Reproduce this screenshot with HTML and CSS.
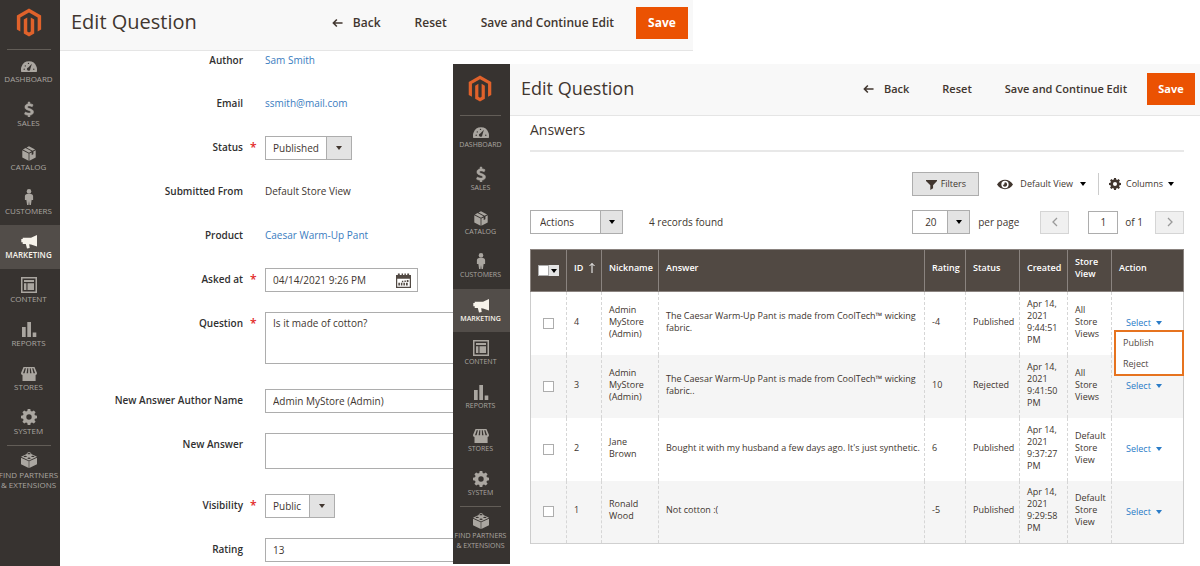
FILE: index.html
```html
<!DOCTYPE html>
<html lang="en">
<head>
<meta charset="utf-8">
<title>Edit Question</title>
<link rel="stylesheet" href="styles.css">
</head>
<body>
<svg class="sprite" aria-hidden="true">
  <symbol id="i-logo" viewBox="0 0 24 24"><path d="M12 0 1.6 6v12l2.97 1.7v-12L12 3.43l7.43 4.27v12L22.4 18V6zM13.5 19.7l-1.5.9-1.5-.9v-12L7.54 9.43v12L12 24l4.46-2.57v-12L13.5 7.7z"/></symbol>
  <symbol id="i-dash" viewBox="0 0 16 16"><path fill-rule="evenodd" d="M.3 15A8 8 0 0 1 .6 9.500 7.800 7.800 0 0 1 15.400 9.500a8 8 0 0 1 .3 5.500zM10.900 6.800 7.300 10.400a1.700 1.700 0 1 0 2 1.600zM3.200 11.500a.7.7 0 1 0 0 1.400.7.7 0 0 0 0-1.400zM4.300 8.200a.7.7 0 1 0 0 1.400.7.7 0 0 0 0-1.400zM7.500 5.700a.7.7 0 1 0 0 1.400.7.7 0 0 0 0-1.400zM12.800 11.500a.7.7 0 1 0 0 1.400.7.7 0 0 0 0-1.400z"/></symbol>
  <symbol id="i-dollar" viewBox="0 0 16 16"><path stroke="currentColor" stroke-width=".5" d="M7.100 1h1.800v1.700c1.500.1 2.600.6 3.200 1.100l-.9 2c-.9-.5-1.900-.9-3-.9-1.200 0-1.700.5-1.700 1.100 0 .8.900 1.100 2.300 1.600 2.300.8 3.700 1.700 3.700 3.500 0 1.500-1.200 2.900-3.600 3.200V16H7.100v-1.700c-1.500-.1-2.900-.6-3.600-1.200l.9-2.100c.9.6 2.200 1.100 3.500 1.100 1.200 0 1.900-.4 1.900-1.100 0-.8-.8-1.100-2.200-1.600C5.300 8.700 3.900 7.900 3.900 6c0-1.500 1.100-2.900 3.200-3.200z"/></symbol>
  <symbol id="i-box" viewBox="0 0 16 16"><path d="M7.600 8.500v7.300L1.300 12.500V5.300zM8.400 8.500v7.300l6.300-3.300V5.300L12.400 6.500v2.700l-1.700.9V7.400zM1.900 4.500 4.600 3.100l6 3.200L8 7.700zM5.500 2.600 8 1.300l6.100 3.200-2.600 1.300z"/></symbol>
  <symbol id="i-person" viewBox="0 0 16 16"><circle cx="8" cy="2.400" r="2.300"/><path d="M6.200 5h3.600c1.500 0 2.300 1 2.300 2.300V11h-1.400v-.5L9.900 16H8.500l-.5-4-.5 4H6.100l-.8-5.500v.5H3.900V7.300C3.900 6 4.700 5 6.200 5z"/></symbol>
  <symbol id="i-horn" viewBox="0 0 16 16"><path d="M16 2v11.500l-6-2-1.800-.2.500 3.600-2.700.6-1.200-4.400H1.700V9.300H.3V5.900h1.400V4.700H10z"/></symbol>
  <symbol id="i-layout" viewBox="0 0 16 16"><path fill-rule="evenodd" d="M0 0h16v16H0zM1.500 1.500v13h13v-13zM3 3h10v2H3zM3 6.300h2.400v6.700H3zM6.500 6.300H13v6.700H6.500z"/></symbol>
  <symbol id="i-bars" viewBox="0 0 16 16"><path d="M1 6h3.700v10H1zM6.300 1H10v15H6.300zM11.700 11.500h3.600V16h-3.600z"/></symbol>
  <symbol id="i-store" viewBox="0 0 16 16"><path fill-rule="evenodd" d="M2.500 2h11L16 8c0 1.200-.6 2-1.400 2v6H1.500v-6C.6 10 0 9.200 0 8zM3.700 3.300 2 8.300h1.600l1.300-5zM6.300 3.300l-.7 5h1.500l.2-5zM8.800 3.300l.2 5h1.500l-.8-5zM11.200 3.300l1.300 5h1.600l-1.700-5z"/></symbol>
  <symbol id="i-gear" viewBox="0 0 16 16"><path fill-rule="evenodd" d="M6.700 0h2.600l.4 2 1.300.6L12.800 1.400l1.800 1.800-1.200 1.800.6 1.300 2 .4v2.600l-2 .4-.6 1.300 1.200 1.800-1.800 1.800-1.800-1.200-1.300.6-.4 2H6.700l-.4-2L5 13.400l-1.800 1.200-1.800-1.800L2.600 11 2 9.700l-2-.4V6.700l2-.4L2.600 5 1.400 3.200l1.800-1.800L5 2.600 6.300 2zM8 5.300a2.700 2.700 0 1 0 0 5.400 2.700 2.700 0 0 0 0-5.400z"/></symbol>
  <symbol id="i-brick" viewBox="0 0 16 16"><path fill-rule="evenodd" d="M7.700 9.300v6.600L0 12.300V5.800zM8.300 9.300v6.600l7.700-3.600V5.800zM8 .1l2.100.8.200 1L16 4.700 8 8.500 0 4.700l5.700-2.800.2-1zM8 1a1.500.6 0 1 0 0 1.300A1.500.6 0 0 0 8 1zM4.200 3.700a1.600.7 0 1 0 .1 1.400 1.600.7 0 0 0-.1-1.400zM11.800 3.700a1.600.7 0 1 0 .1 1.400 1.600.7 0 0 0-.1-1.400zM8 5.500A1.600.7 0 1 0 8.100 6.900 1.600.7 0 0 0 8 5.500z"/></symbol>
  <symbol id="i-back" viewBox="0 0 12 12"><path fill="none" stroke="currentColor" stroke-width="1.700" d="M11.500 6H2M5.300 2.200 1.500 6l3.800 3.800"/></symbol>
  <symbol id="i-cal" viewBox="0 0 16 16"><path fill-rule="evenodd" d="M0 2h2V.5h2V2h2V.5h1.500V2h1.500V.5h1.500V2h1.500V.5h2V2h2v14H0zM1.300 6v8.700h13.400V6z"/><path d="M9 8h1.500v1.500H9zM11.500 7.500h1.800v2h-1.800zM6.300 8.300h1.500v1.500H6.300zM2.500 10.500h1.700v2.800H2.500zM5.200 10.500h1.600v2.800H5.200zM7.900 10.500h1.600v2.800H7.900zM10.600 10.500h1.900v2.800h-1.900z"/></symbol>
  <symbol id="i-funnel" viewBox="0 0 12 12"><path d="M0 1h12v1.200L7.700 6.800V10L4.700 12V6.800L0 2.200z"/></symbol>
  <symbol id="i-eye" viewBox="0 0 18 12"><path fill-rule="evenodd" d="M0 6C4-1 14-1 18 6 14 13 4 13 0 6zM9 1.900a4.100 4.100 0 1 0 0 8.200A4.100 4.100 0 0 0 9 1.900zM9 3.600a2.400 2.400 0 1 1-2.400 2.600c.9.400 1.900-.2 1.700-1.200C8.200 4.300 8.500 3.800 9 3.600z"/></symbol>
  <symbol id="i-sort" viewBox="0 0 8 12"><path fill="none" stroke="currentColor" d="M4 11V1.500M1.500 4 4 1.500 6.500 4"/></symbol>
  <symbol id="i-prev" viewBox="0 0 8 10"><path fill="none" stroke="currentColor" stroke-width="1.300" d="M6 1 2 5l4 4"/></symbol>
  <symbol id="i-next" viewBox="0 0 8 10"><path fill="none" stroke="currentColor" stroke-width="1.300" d="m2 1 4 4-4 4"/></symbol>
</svg>

<main class="stage">
  <section class="window window-back">
    <nav class="menu" aria-label="Main menu">
      <a class="logo" href="#"><svg><use href="#i-logo"/></svg></a>
      <a class="item" href="#"><svg><use href="#i-dash"/></svg>DASHBOARD</a>
      <a class="item" href="#"><svg><use href="#i-dollar"/></svg>SALES</a>
      <a class="item" href="#"><svg><use href="#i-box"/></svg>CATALOG</a>
      <a class="item" href="#"><svg><use href="#i-person"/></svg>CUSTOMERS</a>
      <a class="item active" href="#"><svg><use href="#i-horn"/></svg>MARKETING</a>
      <a class="item" href="#"><svg><use href="#i-layout"/></svg>CONTENT</a>
      <a class="item" href="#"><svg><use href="#i-bars"/></svg>REPORTS</a>
      <a class="item" href="#"><svg><use href="#i-store"/></svg>STORES</a>
      <a class="item" href="#"><svg><use href="#i-gear"/></svg>SYSTEM</a>
      <a class="item partners" href="#"><svg><use href="#i-brick"/></svg>FIND PARTNERS<br>&amp; EXTENSIONS</a>
    </nav>
    <div class="page">
      <header class="head">
        <h1>Edit Question</h1>
        <button class="act" type="button"><svg><use href="#i-back"/></svg>Back</button>
        <button class="act" type="button">Reset</button>
        <button class="act" type="button">Save and Continue Edit</button>
        <button class="save" type="button">Save</button>
      </header>
      <form class="form">
        <div class="row first"><span class="label">Author</span><a href="#">Sam Smith</a></div>
        <div class="row"><span class="label">Email</span><a href="#">ssmith@mail.com</a></div>
        <div class="row"><label class="label required" for="status">Status</label><span class="select"><select id="status"><option>Published</option></select></span></div>
        <div class="row"><span class="label">Submitted From</span><span>Default Store View</span></div>
        <div class="row"><span class="label">Product</span><a href="#">Caesar Warm-Up Pant</a></div>
        <div class="row"><label class="label required" for="asked">Asked at</label><span class="date"><input id="asked" type="text" value="04/14/2021 9:26 PM"><button type="button" aria-label="Choose date"><svg><use href="#i-cal"/></svg></button></span></div>
        <div class="row"><label class="label required" for="question">Question</label><textarea id="question" class="field tall">Is it made of cotton?</textarea></div>
        <div class="row spaced"><label class="label" for="author">New Answer Author Name</label><input id="author" class="field" type="text" value="Admin MyStore (Admin)"></div>
        <div class="row"><label class="label" for="answer">New Answer</label><textarea id="answer" class="field"></textarea></div>
        <div class="row spaced"><label class="label required" for="visibility">Visibility</label><span class="select"><select id="visibility"><option>Public</option></select></span></div>
        <div class="row"><label class="label" for="rating">Rating</label><input id="rating" class="field" type="text" value="13"></div>
      </form>
    </div>
  </section>

  <section class="window window-front">
    <nav class="menu" aria-label="Main menu">
      <a class="logo" href="#"><svg><use href="#i-logo"/></svg></a>
      <a class="item" href="#"><svg><use href="#i-dash"/></svg>DASHBOARD</a>
      <a class="item" href="#"><svg><use href="#i-dollar"/></svg>SALES</a>
      <a class="item" href="#"><svg><use href="#i-box"/></svg>CATALOG</a>
      <a class="item" href="#"><svg><use href="#i-person"/></svg>CUSTOMERS</a>
      <a class="item active" href="#"><svg><use href="#i-horn"/></svg>MARKETING</a>
      <a class="item" href="#"><svg><use href="#i-layout"/></svg>CONTENT</a>
      <a class="item" href="#"><svg><use href="#i-bars"/></svg>REPORTS</a>
      <a class="item" href="#"><svg><use href="#i-store"/></svg>STORES</a>
      <a class="item" href="#"><svg><use href="#i-gear"/></svg>SYSTEM</a>
      <a class="item partners" href="#"><svg><use href="#i-brick"/></svg>FIND PARTNERS<br>&amp; EXTENSIONS</a>
    </nav>
    <div class="page">
      <header class="head">
        <h1>Edit Question</h1>
        <button class="act" type="button"><svg><use href="#i-back"/></svg>Back</button>
        <button class="act" type="button">Reset</button>
        <button class="act" type="button">Save and Continue Edit</button>
        <button class="save" type="button">Save</button>
      </header>
      <div class="answers">
        <h2>Answers</h2>
        <div class="tools">
          <button class="filters" type="button"><svg><use href="#i-funnel"/></svg>Filters</button>
          <button class="tool view" type="button"><svg><use href="#i-eye"/></svg>Default View<i class="caret"></i></button>
          <button class="tool columns" type="button"><svg><use href="#i-gear"/></svg>Columns<i class="caret"></i></button>
        </div>
        <div class="pager">
          <span class="select actions"><select aria-label="Actions"><option>Actions</option></select></span>
          <span class="count">4 records found</span>
          <span class="select size"><select id="size"><option>20</option></select></span>
          <label class="per" for="size">per page</label>
          <button class="step" type="button" aria-label="Previous page" disabled><svg><use href="#i-prev"/></svg></button>
          <input class="current" id="current" type="text" value="1"><label class="of" for="current">of 1</label>
          <button class="step" type="button" aria-label="Next page" disabled><svg><use href="#i-next"/></svg></button>
        </div>
        <table class="grid">
          <colgroup><col class="c-check"><col class="c-id"><col class="c-nick"><col><col class="c-rating"><col class="c-status"><col class="c-created"><col class="c-store"><col class="c-action"></colgroup>
          <thead>
            <tr><th><span class="multi"><input type="checkbox" aria-label="Select all"><button type="button" aria-label="Selection options"><i class="caret"></i></button></span></th><th><span class="sorted">ID<svg><use href="#i-sort"/></svg></span></th><th>Nickname</th><th>Answer</th><th>Rating</th><th>Status</th><th>Created</th><th>Store View</th><th>Action</th></tr>
          </thead>
          <tbody>
            <tr><td><input type="checkbox" aria-label="Select 4"></td><td>4</td><td>Admin MyStore (Admin)</td><td class="wide">The Caesar Warm-Up Pant is made from CoolTech™ wicking fabric.</td><td>-4</td><td>Published</td><td class="wide">Apr 14, 2021 9:44:51 PM</td><td>All Store Views</td><td class="action"><button class="pick" type="button">Select<i class="caret"></i></button><ul class="options"><li><a href="#">Publish</a></li><li><a href="#">Reject</a></li></ul></td></tr>
            <tr><td><input type="checkbox" aria-label="Select 3"></td><td>3</td><td>Admin MyStore (Admin)</td><td class="wide">The Caesar Warm-Up Pant is made from CoolTech™ wicking fabric..</td><td>10</td><td>Rejected</td><td class="wide">Apr 14, 2021 9:41:50 PM</td><td>All Store Views</td><td class="action"><button class="pick" type="button">Select<i class="caret"></i></button></td></tr>
            <tr><td><input type="checkbox" aria-label="Select 2"></td><td>2</td><td>Jane Brown</td><td class="wide">Bought it with my husband a few days ago. It's just synthetic.</td><td>6</td><td>Published</td><td class="wide">Apr 14, 2021 9:37:27 PM</td><td>Default Store View</td><td class="action"><button class="pick" type="button">Select<i class="caret"></i></button></td></tr>
            <tr><td><input type="checkbox" aria-label="Select 1"></td><td>1</td><td>Ronald Wood</td><td class="wide">Not cotton :(</td><td>-5</td><td>Published</td><td class="wide">Apr 14, 2021 9:29:58 PM</td><td>Default Store View</td><td class="action"><button class="pick" type="button">Select<i class="caret"></i></button></td></tr>
          </tbody>
        </table>
      </div>
    </div>
  </section>
</main>
</body>
</html>
```
FILE: styles.css
```css
* { box-sizing: border-box; }
body { margin: 0; background: #fff; color: #41362f; font: 10px/14px "Open Sans", "Noto Sans", sans-serif; }
button, input, select, textarea { font: inherit; color: inherit; margin: 0; padding: 0; border: 0; border-radius: 0; background: none; }
svg { fill: currentColor; flex: none; display: block; }
a { color: #3a7cc0; text-decoration: none; }
.sprite { position: absolute; width: 0; height: 0; }

.stage { position: relative; min-height: 100vh; overflow: hidden; }
.window { display: grid; background: #fff; }
.window-back { grid-template-columns: 60px 1fr; width: 58%; max-width: 693px; min-height: 100vh; }
.window-front { position: absolute; left: 453px; right: 0; top: 64px; bottom: 2px; grid-template-columns: 57px 1fr; }

.menu { display: flex; flex-direction: column; background: #373330; padding-right: 3px; }
.logo { display: flex; align-items: center; justify-content: center; height: 49px; padding-bottom: 5px; color: #e0622b; }
.logo svg { width: 28px; height: 29px; }
.item { display: flex; flex-direction: column; align-items: center; gap: 1px; height: 44px; padding-top: 8px; margin-right: -3px; padding-right: 3px; color: #aaa6a0; font-size: 8px; line-height: 10px; text-align: center; white-space: nowrap; }
.item svg { width: 16px; height: 16px; }
.logo + .item, .partners { position: relative; }
.logo + .item::before, .partners::before { content: ""; position: absolute; top: 0; left: 7px; right: 9px; border-top: 1px solid #625d57; }
.active { background: #524d49; color: #f7f3eb; font-weight: 600; }
.partners { height: auto; padding-top: 7px; gap: 2px; }
.window-front .logo { height: 51px; padding-bottom: 3px; }
.window-front .logo svg { width: 26px; height: 29px; }
.window-front .item { flex: 1; padding-right: 2px; font-size: 7px; }
.window-front .partners { flex: none; height: 58px; }

.page { min-width: 0; }
.head { display: flex; align-items: center; height: 51px; padding: 0 5px 5px 11px; background: #f8f8f8; border-bottom: 1px solid #e5e5e5; font-size: 12px; font-weight: 600; }
h1 { flex: 1; margin: 0; font-size: 20px; line-height: 26px; font-weight: 400; padding-bottom: 2px; }
.act { display: flex; align-items: center; gap: 10px; margin-right: 34px; white-space: nowrap; }
.act svg { width: 11px; height: 12px; }
.head .act:nth-last-child(2) { margin-right: 22px; }
.save { height: 32px; width: 52px; background: #eb5202; color: #fff; font-weight: 700; }
.window-front .head { height: 52px; padding-bottom: 2px; font-size: 11px; }
.window-front h1 { font-size: 18px; }
.window-front .act { margin-right: 33px; }
.window-front .head .act:nth-last-child(2) { margin-right: 20px; }
.window-front .save { width: 48px; }

.form { display: flex; flex-direction: column; gap: 20px; padding-right: 12px; }
.row { display: grid; grid-template-columns: 183px 1fr; column-gap: 22px; line-height: 23px; }
.row > a, .row > span { min-height: 24px; }
.first { height: 21px; line-height: 18px; }
.label { position: relative; text-align: right; font-weight: 600; color: #303030; white-space: nowrap; }
.required::after { content: "*"; position: absolute; left: 100%; margin-left: 7px; color: #e22626; font-size: 12px; }
.spaced { margin-top: 5px; }
.field, .date { border: 1px solid #adadad; background: #fff; }
.field { display: block; width: 100%; height: 24px; padding: 0 7px; }
textarea.field { height: 36px; resize: none; line-height: 20px; overflow: hidden; }
textarea.tall { height: 52px; }
.date { display: flex; align-items: center; justify-self: start; width: 153px; height: 24px; padding: 0 6px 0 7px; }
.date input { flex: 1; min-width: 0; height: 22px; }
.date svg { width: 15px; height: 15px; color: #514943; }

.select { position: relative; display: inline-flex; justify-self: start; height: 24px; border: 1px solid #adadad; background: #fff; }
.select select { appearance: none; padding: 0 32px 0 7px; line-height: 20px; }
.select::before { content: ""; position: absolute; right: 0; top: 0; bottom: 0; width: 24px; border-left: 1px solid #adadad; background: #e3e3e3; pointer-events: none; }
.select::after, .caret { border: 3px solid transparent; border-top: 4px solid currentColor; border-bottom: 0; width: 0; height: 0; }
.select::after { content: ""; position: absolute; right: 9px; top: 9px; pointer-events: none; }

.answers { padding: 6px 16px 0 20px; font-size: 9px; line-height: 12px; }
h2 { margin: 0 0 20px; padding-bottom: 13px; border-bottom: 2px solid #e8e8e8; font-size: 14px; line-height: 15px; font-weight: 400; }
.tools, .pager { display: flex; align-items: center; height: 24px; }
.tools { justify-content: flex-end; }
.filters { display: flex; align-items: center; justify-content: center; gap: 4px; width: 67px; height: 24px; border: 1px solid #adadad; background: #e3e3e3; }
.filters svg { width: 11px; height: 11px; }
.tool { display: flex; align-items: center; gap: 7px; height: 22px; white-space: nowrap; }
.tool .caret { color: #000; }
.tool svg { width: 12px; height: 12px; }
.view { margin-left: 18px; padding-right: 12px; border-right: 1px solid #ccc; }
.view svg { width: 16px; height: 11px; }
.columns { gap: 5px; padding: 0 10px; }
.pager { margin: 14px 0 15px; font-size: 10px; }
.pager .select select { width: 91px; padding: 0 0 0 9px; }
.pager .select::before { width: 21px; }
.pager .select::after { right: 7px; color: #000; }
.count { flex: 1; margin-left: 26px; }
.pager .size select { width: 56px; padding-left: 12px; }
.per { margin: 0 21px 0 8px; }
.step { display: flex; align-items: center; justify-content: center; width: 29px; height: 23px; border: 1px solid #d5d5d5; background: #f0f0f0; color: #999; }
.step svg { width: 8px; height: 10px; }
.current { width: 30px; height: 23px; margin-left: 19px; border: 1px solid #adadad; text-align: center; }
.of { margin: 0 12px 0 7px; }

.grid { width: 100%; table-layout: fixed; border-collapse: collapse; border-bottom: 1px solid #d0d0d0; }
.c-check { width: 36px; }
.c-id { width: 35px; }
.c-nick { width: 57px; }
.c-rating { width: 41px; }
.c-status { width: 54px; }
.c-created { width: 48px; }
.c-store { width: 44px; }
.c-action { width: 72px; }
.grid th { height: 42px; padding: 0 6px 5px 7px; background: #514943; border: 1px solid #8a837f; color: #fff; font-weight: 600; text-align: left; }
.grid td { height: 63px; padding: 0 7px 3px; border-left: 1px dashed #d6d6d6; border-right: 1px dashed #d6d6d6; }
.grid td:first-child { padding: 0; border-left: 1px solid #ccc; text-align: center; }
.grid td:last-child { border-right: 1px solid #ccc; }
.grid .wide { padding-right: 2px; }
.grid tbody tr:nth-child(even) { background: #f5f5f5; }
.grid input { appearance: none; display: block; width: 11px; height: 11px; margin: 0 auto; border: 1px solid #adadad; background: #fff; }
.grid th:first-child { padding: 0 7px; }
.grid .multi { display: flex; height: 11px; }
.grid .multi input { margin: 0; }
.multi button { display: flex; align-items: center; justify-content: center; width: 10px; height: 11px; background: #e3e3e3; color: #000; }
.sorted { display: flex; align-items: center; gap: 5px; }
.sorted svg { width: 8px; height: 12px; }
.grid .action { position: relative; padding: 0 0 0 14px; }
.pick { display: flex; align-items: center; gap: 5px; color: #2a7cc7; }
.options { position: absolute; z-index: 1; left: 2px; right: -1px; top: 38px; margin: 0; padding: 0 7px; list-style: none; border: 2px solid #e6731f; background: #fff; line-height: 21px; }
.options a { color: #514943; }
```
